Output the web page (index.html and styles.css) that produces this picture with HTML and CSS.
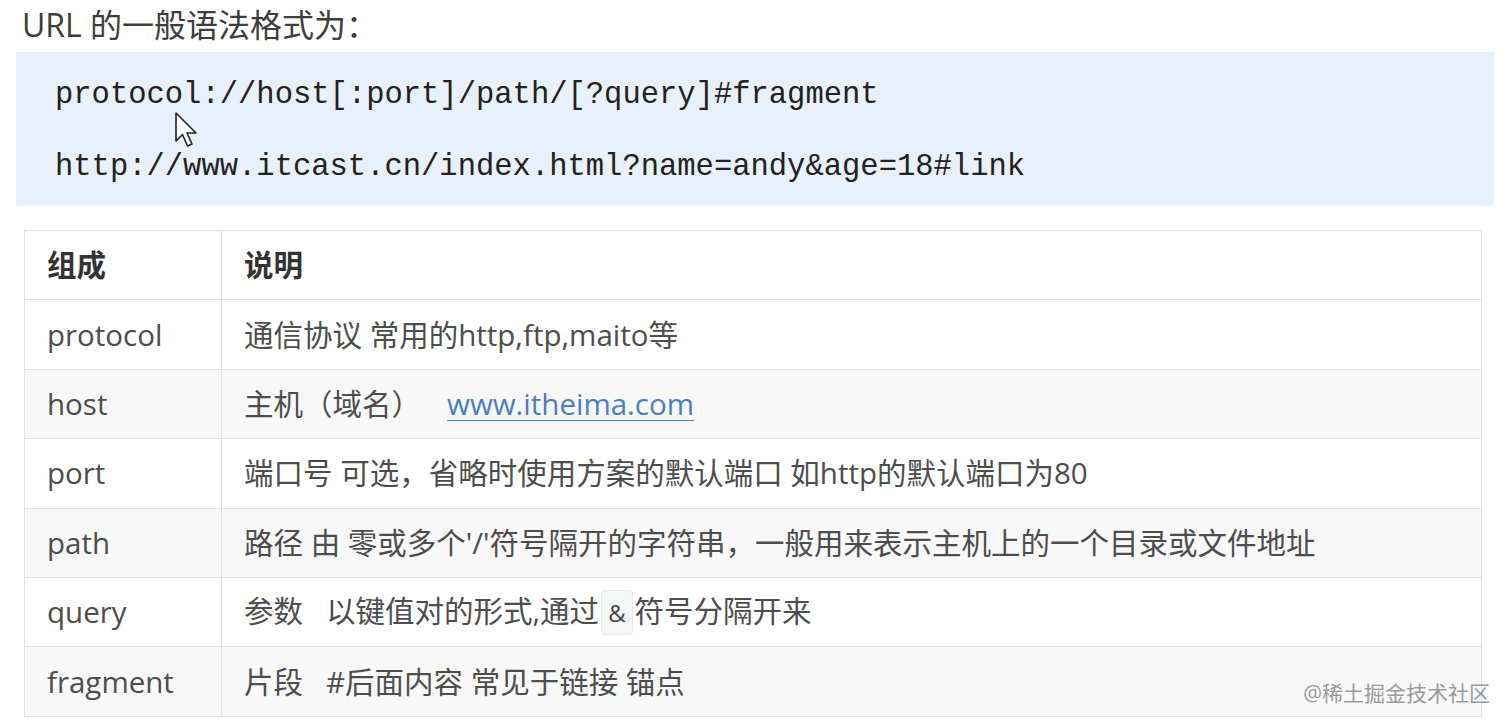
FILE: index.html
```html
<!DOCTYPE html>
<html lang="zh-CN">
<head>
    <meta charset="UTF-8">
    <meta name="viewport" content="width=device-width, initial-scale=1.0">
    <title>URL 的一般语法格式</title>
    <link rel="stylesheet" href="styles.css">
</head>
<body>
    <div class="page">
        <p class="title">URL 的一般语法格式为<span class="colon">：</span></p>

        <pre class="code"><code>protocol://host[:port]/path/[?query]#fragment

http://www.itcast.cn/index.html?name=andy&amp;age=18#link</code></pre>

        <table class="url-table">
            <colgroup>
                <col class="col-name">
                <col>
            </colgroup>
            <thead>
                <tr>
                    <th>组成</th>
                    <th>说明</th>
                </tr>
            </thead>
            <tbody>
                <tr>
                    <td>protocol</td>
                    <td>通信协议 常用的http,ftp,maito等</td>
                </tr>
                <tr>
                    <td>host</td>
                    <td>主机（域名）<a class="link" href="#">www.itheima.com</a></td>
                </tr>
                <tr>
                    <td>port</td>
                    <td>端口号 可选，省略时使用方案的默认端口 如http的默认端口为80</td>
                </tr>
                <tr>
                    <td>path</td>
                    <td>路径 由 零或多个'/'符号隔开的字符串，一般用来表示主机上的一个目录或文件地址</td>
                </tr>
                <tr>
                    <td>query</td>
                    <td>参数&nbsp;&nbsp;&nbsp;以键值对的形式,通过<code class="inline">&amp;</code>符号分隔开来</td>
                </tr>
                <tr>
                    <td>fragment</td>
                    <td>片段&nbsp;&nbsp;&nbsp;#后面内容 常见于链接 锚点</td>
                </tr>
            </tbody>
        </table>

        <!-- mouse pointer from the screen recording -->
        <svg class="cursor" width="24" height="38" viewBox="0 0 24 38">
            <path d="M2 2 L2 30 L8.5 23.5 L13.5 35 L18 33 L13 22 L22 22 Z" fill="#fff" stroke="#222" stroke-width="1.6" stroke-linejoin="round"/>
        </svg>

        <div class="watermark">@稀土掘金技术社区</div>
    </div>
</body>
</html>
```

FILE: styles.css
```css
body { margin: 0; background: #fff; color: #333; font-family: "Open Sans", "Noto Sans CJK SC", sans-serif; }
.page { position: relative; height: 725px; padding: 3px 18px 0 16px; box-sizing: border-box; overflow: hidden; }
.title { margin: 0 0 7px 6px; font-size: 32px; line-height: 40px; color: #3d3d3d; }
.colon { font-family: "Noto Sans CJK TC", sans-serif; }
.code { margin: 0; padding: 25px 39px 21px; background: #e8f0fc; color: #222; font: 30.5px/36px "Liberation Mono", monospace; }
.code code { font: inherit; }
.url-table { width: calc(100% - 20px); margin: 24px 12px 0 8px; border-collapse: collapse; font-size: 29.5px; color: #4d4d4d; }
.col-name { width: 197px; }
.url-table tr { height: 69.4px; }
.url-table th, .url-table td { border: 1px solid #dfe2e5; padding: 0 22px; line-height: 44px; text-align: left; white-space: nowrap; }
.url-table th { color: #333; font-weight: 700; }
.url-table tbody tr:nth-child(2n) { background: #f8f8f8; }
.link { margin-left: 26px; color: #4a7fc4; text-decoration: underline; text-underline-offset: 5px; text-decoration-thickness: 1px; }
.inline { margin: 0 2px; padding: 5px 6px; background: #f5f6f6; border: 1px solid #e7eaed; border-radius: 4px; font-family: "Open Sans", sans-serif; font-size: 24px; color: #444; }
.cursor { position: absolute; left: 174px; top: 111px; }
.watermark { position: absolute; right: 22px; top: 677px; font-size: 21px; color: #9a9a9a; }
```
